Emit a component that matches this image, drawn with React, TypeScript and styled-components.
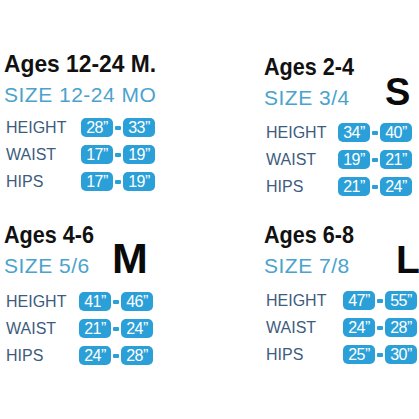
import React from 'react';
import styled, { createGlobalStyle } from 'styled-components';

const GlobalStyle = createGlobalStyle`
  html, body {
    margin: 0;
    padding: 0;
    background: #ffffff;
  }
  body {
    font-family: "Liberation Sans", Arial, sans-serif;
  }
`;

type Measure = { label: string; from: string; to: string };

interface SizeCardData {
  age: string;
  ageScale: number;
  size: string;
  letter?: string;
  letterX?: number;
  letterSize?: number;
  labelWidth: number;
  shift?: number;
  rows: Measure[];
}

const cards: SizeCardData[] = [
  {
    age: 'Ages 12-24 M.',
    ageScale: 0.95,
    size: 'SIZE 12-24 MO',
    labelWidth: 75,
    rows: [
      { label: 'HEIGHT', from: '28', to: '33' },
      { label: 'WAIST', from: '17', to: '19' },
      { label: 'HIPS', from: '17', to: '19' },
    ],
  },
  {
    age: 'Ages 2-4',
    ageScale: 0.9,
    size: 'SIZE 3/4',
    letter: 'S',
    letterX: 121,
    letterSize: 38,
    labelWidth: 72,
    shift: 3,
    rows: [
      { label: 'HEIGHT', from: '34', to: '40' },
      { label: 'WAIST', from: '19', to: '21' },
      { label: 'HIPS', from: '21', to: '24' },
    ],
  },
  {
    age: 'Ages 4-6',
    ageScale: 0.9,
    size: 'SIZE 5/6',
    letter: 'M',
    letterX: 108,
    letterSize: 43,
    labelWidth: 73,
    rows: [
      { label: 'HEIGHT', from: '41', to: '46' },
      { label: 'WAIST', from: '21', to: '24' },
      { label: 'HIPS', from: '24', to: '28' },
    ],
  },
  {
    age: 'Ages 6-8',
    ageScale: 0.9,
    size: 'SIZE 7/8',
    letter: 'L',
    letterX: 132,
    letterSize: 39,
    labelWidth: 77,
    rows: [
      { label: 'HEIGHT', from: '47', to: '55' },
      { label: 'WAIST', from: '24', to: '28' },
      { label: 'HIPS', from: '25', to: '30' },
    ],
  },
];

export default function App() {
  return (
    <>
      <GlobalStyle />
      <Chart>
        {cards.map((card) => (
          <Card key={card.age} $shift={card.shift ?? 0}>
            <Header $letterX={card.letterX ?? 0}>
              <TitleBlock>
                <Age $scale={card.ageScale}>{card.age}</Age>
                <SizeName>{card.size}</SizeName>
              </TitleBlock>
              {card.letter && <Letter $size={card.letterSize ?? 40}>{card.letter}</Letter>}
            </Header>
            <Rows>
              {card.rows.map((row) => (
                <Row key={row.label}>
                  <Label $width={card.labelWidth}>{row.label}</Label>
                  <Pill>{row.from}”</Pill>
                  <Dash />
                  <Pill>{row.to}”</Pill>
                </Row>
              ))}
            </Rows>
          </Card>
        ))}
      </Chart>
    </>
  );
}

const Chart = styled.div`
  width: 419px;
  height: 419px;
  box-sizing: border-box;
  padding: 51px 0 0 4px;
  display: grid;
  grid-template-columns: 260px 1fr;
  row-gap: 26px;
  align-items: start;
  align-content: start;
  overflow: hidden;
`;

const Card = styled.section<{ $shift: number }>`
  display: flex;
  flex-direction: column;
  margin-top: ${(p) => p.$shift}px;
`;

const Header = styled.div<{ $letterX: number }>`
  display: grid;
  grid-template-columns: ${(p) => p.$letterX}px auto;
  align-items: last baseline;
`;

const TitleBlock = styled.div`
  display: flex;
  flex-direction: column;
  white-space: nowrap;
`;

const Age = styled.h2<{ $scale: number }>`
  margin: 0 0 7px;
  font-weight: 700;
  font-size: 24px;
  line-height: 26px;
  color: #111111;
  transform: scaleX(${(p) => p.$scale});
  transform-origin: left center;
`;

const SizeName = styled.div`
  font-size: 21px;
  line-height: 22px;
  letter-spacing: 0.5px;
  color: #4ba3cc;
`;

const Letter = styled.div<{ $size: number }>`
  font-weight: 700;
  font-size: ${(p) => p.$size}px;
  line-height: 1;
  color: #0a0a0a;
`;

const Rows = styled.div`
  margin-top: 12px;
  padding-left: 2px;
  display: flex;
  flex-direction: column;
  gap: 8px;
`;

const Row = styled.div`
  display: flex;
  align-items: center;
  height: 19px;
`;

const Label = styled.span<{ $width: number }>`
  width: ${(p) => p.$width}px;
  font-size: 16px;
  line-height: 19px;
  color: #3d5c7e;
`;

const Pill = styled.span`
  width: 32px;
  height: 19px;
  border-radius: 5px;
  background: #2b9fd7;
  color: #ffffff;
  font-size: 16px;
  line-height: 19px;
  letter-spacing: -0.5px;
  text-align: center;
`;

const Dash = styled.span`
  width: 6px;
  height: 4px;
  margin: 0 2px;
  border-radius: 1px;
  background: #2b9fd7;
`;
